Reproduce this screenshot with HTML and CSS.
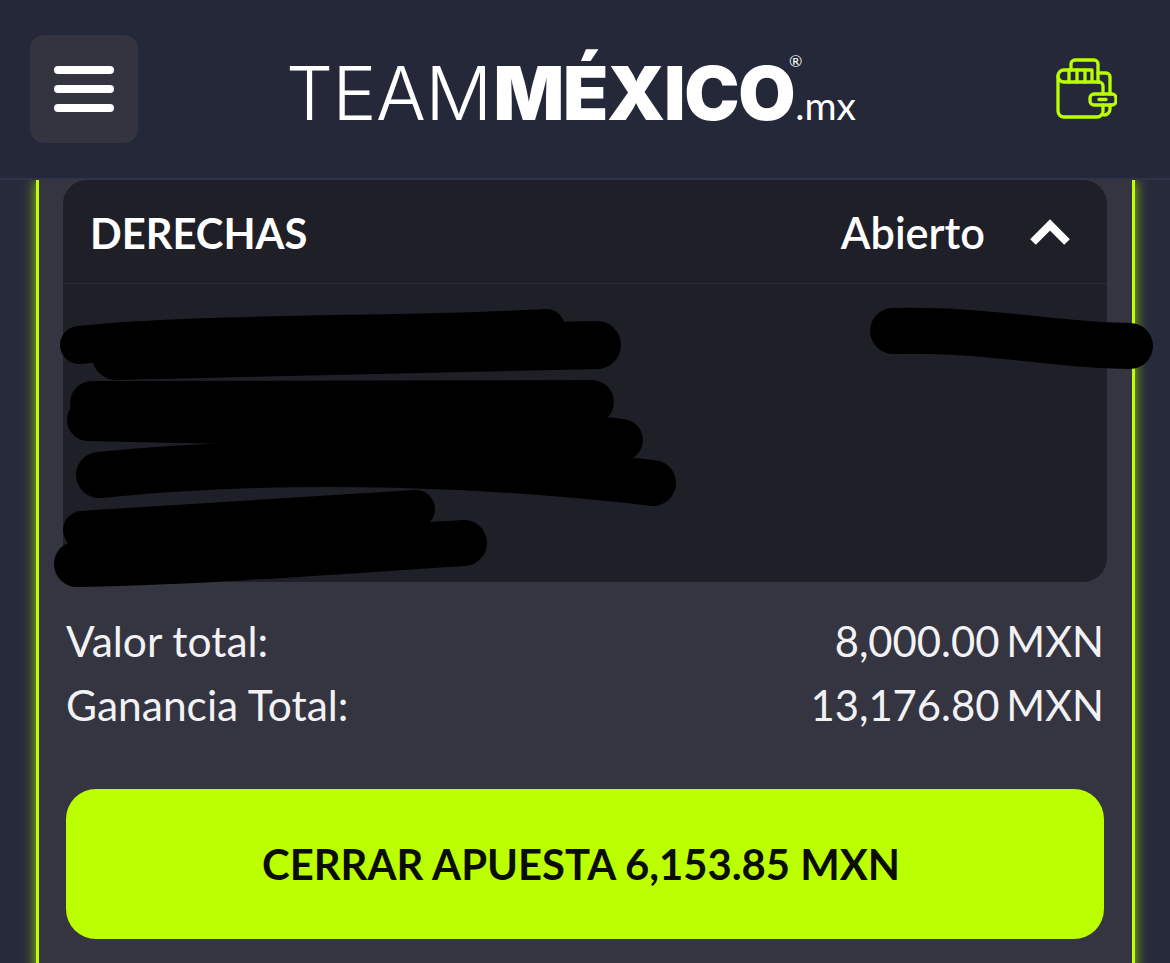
FILE: index.html
```html
<!DOCTYPE html>
<html>
<head>
  <meta charset="UTF-8">
  <title>Team Mexico</title>
  <link rel="stylesheet" href="styles.css">
</head>
<body>
  <div class="top-bar">
    <button class="menu-button">
      <span class="menu-line"></span>
      <span class="menu-line"></span>
      <span class="menu-line"></span>
    </button>
    <div class="logo">
      <span class="logo-light">TEAM</span><span class="logo-bold">MÉXICO</span><span class="logo-reg">®</span><span class="logo-mx">.mx</span>
    </div>
    <svg class="wallet-icon" viewBox="0 0 62 62" fill="none" stroke="#b9ff00" stroke-width="3.300" stroke-linecap="round" stroke-linejoin="round">
      <path d="M16 13V7a4 4 0 0 1 4-4h19a4 4 0 0 1 4 4v18"/>
      <path d="M3 19v35a6 6 0 0 0 6 6h33a6 6 0 0 0 6-6v-6"/>
      <path d="M48 37v-8a4 4 0 0 0-4-4H9a6 6 0 0 1-6-6 6 6 0 0 1 6-6h28v12"/>
      <path d="M14 13v12M22 13v12M30 13v12"/>
      <path d="M43 16h8a4 4 0 0 1 4 4v17M55 48v4a6 6 0 0 1-6 6"/>
      <rect x="35" y="37" width="26" height="11" rx="4"/>
      <path d="M44 42.500h7"/>
    </svg>
  </div>

  <div class="bet-card">
    <div class="legs-panel">
      <div class="legs-header">
        <div class="legs-title">DERECHAS</div>
        <div class="legs-status">Abierto</div>
        <svg class="chevron" viewBox="0 0 42 28" fill="none" stroke="#fff" stroke-width="8" stroke-linejoin="miter">
          <path d="M4 24L21 7l17 17"/>
        </svg>
      </div>
      <div class="legs-body"></div>
    </div>

    <div class="totals">
      <div class="total-row"><span>Valor total:</span><span class="total-value">8,000.00 MXN</span></div>
      <div class="total-row"><span>Ganancia Total:</span><span class="total-value">13,176.80 MXN</span></div>
    </div>

    <button class="close-button">CERRAR APUESTA 6,153.85 MXN</button>
  </div>

  <!-- marker scribbles over the hidden picks -->
  <svg class="scribbles" viewBox="0 0 1170 963" fill="none" stroke="#000" stroke-linecap="round">
    <path stroke-width="38" d="M79 345C200 332 400 336 546 328"/>
    <path stroke-width="48" d="M116 356L597 345"/>
    <path stroke-width="44" d="M92 403L592 402"/>
    <path stroke-width="42" d="M88 420C300 425 500 425 622 440"/>
    <path stroke-width="46" d="M99 475C300 455 500 465 653 483"/>
    <path stroke-width="38" d="M82 530C200 522 320 516 416 509"/>
    <path stroke-width="46" d="M77 564C200 562 350 550 464 543"/>
    <path stroke-width="46" d="M893 331C980 328 1060 346 1130 346"/>
  </svg>
</body>
</html>
```

FILE: styles.css
```css
html, body {
  height: 100%;
  overflow: hidden;
}

body {
  margin: 0;
  background-color: #272a3b;
  font-family: "Lato", sans-serif;
  color: #fff;
}

.top-bar {
  position: relative;
  z-index: 2;
  display: flex;
  align-items: center;
  height: 178px;
  padding: 0 53px 0 30px;
  background-color: #252838;
  border-bottom: 2px solid #30334a;
}

.menu-button {
  display: flex;
  flex-direction: column;
  justify-content: center;
  align-items: center;
  gap: 11px;
  width: 108px;
  height: 108px;
  padding: 0;
  border: none;
  border-radius: 14px;
  background-color: #343441;
}

.menu-line {
  width: 60px;
  height: 8px;
  border-radius: 4px;
  background-color: #fff;
}

.logo {
  position: relative;
  margin-left: 148px;
  margin-top: 8px;
  white-space: nowrap;
  line-height: 1;
}

.logo-light {
  font-family: "Inter", sans-serif;
  font-weight: 300;
  font-size: 74px;
  letter-spacing: -0.500px;
}

.logo-bold {
  margin-left: 2px;
  font-family: "Inter", sans-serif;
  font-weight: 900;
  font-size: 74px;
  letter-spacing: -1.300px;
}

.logo-reg {
  position: absolute;
  top: -3px;
  left: 503px;
  font-size: 16px;
}

.logo-mx {
  margin-left: 1px;
  font-size: 39px;
  font-weight: 400;
}

.wallet-icon {
  width: 62px;
  height: 62px;
  margin-top: -2px;
  margin-left: auto;
}

.bet-card {
  margin: 0 35px 0 36px;
  padding: 0 25px 60px 24px;
  background-color: #353542;
  border-left: 3px solid #bfff00;
  border-right: 3px solid #bfff00;
  box-shadow: 0 0 12px rgba(191, 255, 0, 0.75);
}

.legs-panel {
  background-color: #1f1f28;
  border-radius: 24px;
}

.legs-header {
  display: flex;
  align-items: center;
  height: 100px;
  padding: 3px 36px 0 27px;
  border-bottom: 1px solid #2b2b35;
}

.legs-title {
  font-size: 41.700px;
  font-weight: 700;
}

.legs-status {
  margin-top: -3px;
  margin-left: auto;
  font-size: 43.300px;
  font-weight: 600;
}

.chevron {
  width: 42px;
  height: 28px;
  margin-top: -3px;
  margin-left: 44px;
}

.legs-body {
  height: 298px;
}

.totals {
  padding: 27px 3px 0 3px;
}

.total-row {
  display: flex;
  justify-content: space-between;
  align-items: baseline;
  font-size: 42.500px;
  line-height: 63px;
  color: #f2f2f4;
}

.total-value {
  font-size: 41.800px;
  word-spacing: -4px;
}

.close-button {
  display: block;
  width: 1038px;
  height: 150px;
  margin: 52px 0 0 3px;
  padding: 0 8px 0 0;
  border: none;
  border-radius: 30px;
  background-color: #bcff00;
  font-family: "Lato", sans-serif;
  font-size: 41.800px;
  font-weight: 700;
  color: #0a0d00;
}

.scribbles {
  position: absolute;
  top: 0;
  left: 0;
  width: 1170px;
  height: 963px;
  z-index: 3;
}
```
